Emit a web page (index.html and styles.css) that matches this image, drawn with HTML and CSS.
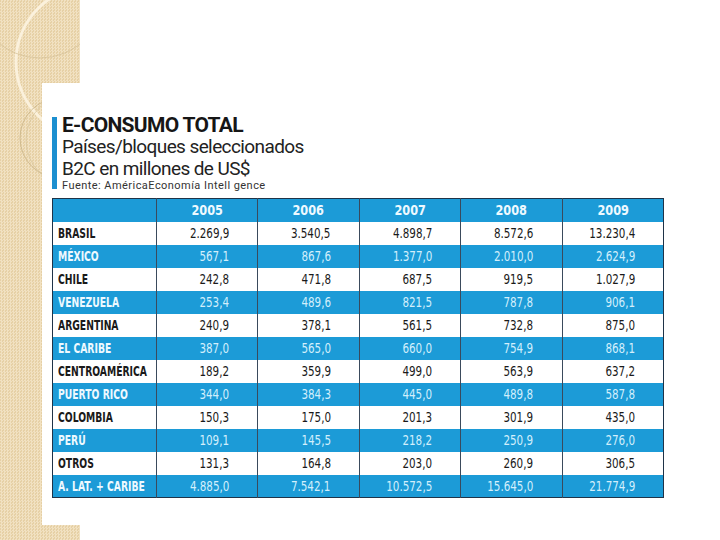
FILE: index.html
```html
<!DOCTYPE html>
<html lang="es">
<head>
<meta charset="utf-8">
<title>E-Consumo total</title>
<link rel="stylesheet" href="styles.css">
</head>
<body>
<div class="strip">
  <svg class="arcs" width="80" height="540" viewBox="0 0 80 540">
    <circle cx="92" cy="62" r="76" fill="none" stroke="#fbf1dc" stroke-width="3"/>
    <circle cx="60" cy="138" r="40" fill="none" stroke="#c9b487" stroke-width="0.8"/>
    <circle cx="40" cy="-6" r="64" fill="none" stroke="#d2bf95" stroke-width="0.7"/>
    <circle cx="72" cy="140" r="46" fill="none" stroke="#d6c49c" stroke-width="0.7"/>
  </svg>
</div>
<main class="panel">
  <header class="title-block">
    <div class="bar"></div>
    <div class="titles">
      <h1 class="t-main">E-CONSUMO TOTAL</h1>
      <p class="t-sub">Países/bloques seleccionados</p>
      <p class="t-sub">B2C en millones de US$</p>
      <p class="t-src">Fuente: AméricaEconomía Intell gence</p>
    </div>
  </header>
  <table class="data">
    <thead>
      <tr class="blue"><th></th><th><span>2005</span></th><th><span>2006</span></th><th><span>2007</span></th><th><span>2008</span></th><th><span>2009</span></th></tr>
    </thead>
    <tbody>
      <tr class="white"><th><span>BRASIL</span></th><td><span>2.269,9</span></td><td><span>3.540,5</span></td><td><span>4.898,7</span></td><td><span>8.572,6</span></td><td><span>13.230,4</span></td></tr>
      <tr class="blue"><th><span>MÉXICO</span></th><td><span>567,1</span></td><td><span>867,6</span></td><td><span>1.377,0</span></td><td><span>2.010,0</span></td><td><span>2.624,9</span></td></tr>
      <tr class="white"><th><span>CHILE</span></th><td><span>242,8</span></td><td><span>471,8</span></td><td><span>687,5</span></td><td><span>919,5</span></td><td><span>1.027,9</span></td></tr>
      <tr class="blue"><th><span>VENEZUELA</span></th><td><span>253,4</span></td><td><span>489,6</span></td><td><span>821,5</span></td><td><span>787,8</span></td><td><span>906,1</span></td></tr>
      <tr class="white"><th><span>ARGENTINA</span></th><td><span>240,9</span></td><td><span>378,1</span></td><td><span>561,5</span></td><td><span>732,8</span></td><td><span>875,0</span></td></tr>
      <tr class="blue"><th><span>EL CARIBE</span></th><td><span>387,0</span></td><td><span>565,0</span></td><td><span>660,0</span></td><td><span>754,9</span></td><td><span>868,1</span></td></tr>
      <tr class="white"><th><span>CENTROAMÉRICA</span></th><td><span>189,2</span></td><td><span>359,9</span></td><td><span>499,0</span></td><td><span>563,9</span></td><td><span>637,2</span></td></tr>
      <tr class="blue"><th><span>PUERTO RICO</span></th><td><span>344,0</span></td><td><span>384,3</span></td><td><span>445,0</span></td><td><span>489,8</span></td><td><span>587,8</span></td></tr>
      <tr class="white"><th><span>COLOMBIA</span></th><td><span>150,3</span></td><td><span>175,0</span></td><td><span>201,3</span></td><td><span>301,9</span></td><td><span>435,0</span></td></tr>
      <tr class="blue"><th><span>PERÚ</span></th><td><span>109,1</span></td><td><span>145,5</span></td><td><span>218,2</span></td><td><span>250,9</span></td><td><span>276,0</span></td></tr>
      <tr class="white"><th><span>OTROS</span></th><td><span>131,3</span></td><td><span>164,8</span></td><td><span>203,0</span></td><td><span>260,9</span></td><td><span>306,5</span></td></tr>
      <tr class="blue"><th><span>A. LAT. + CARIBE</span></th><td><span>4.885,0</span></td><td><span>7.542,1</span></td><td><span>10.572,5</span></td><td><span>15.645,0</span></td><td><span>21.774,9</span></td></tr>
    </tbody>
  </table>
</main>
</body>
</html>
```
FILE: styles.css
```css
html, body {
  margin: 0;
  padding: 0;
  background: #ffffff;
  width: 720px;
  height: 540px;
  overflow: hidden;
}

body {
  position: relative;
  font-family: "DejaVu Sans", sans-serif;
}

.strip {
  position: absolute;
  left: 0;
  top: 0;
  width: 80px;
  height: 540px;
  background-color: #eddab3;
  background-image:
    repeating-conic-gradient(#f1e1c1 0 25%, #e6d0a5 0 50%);
  background-size: 3px 3px;
  z-index: 0;
}

.arcs {
  display: block;
}

.panel {
  position: relative;
  z-index: 1;
  margin: 83px 0 0 42px;
  height: 442px;
  background: #ffffff;
  box-sizing: border-box;
  padding: 31px 0 0 10px;
}

.title-block {
  display: flex;
  gap: 5px;
  align-items: flex-start;
}

.bar {
  width: 5px;
  height: 72px;
  margin-top: 3px;
  background: #1c8fd0;
}

.titles {
  display: flex;
  flex-direction: column;
  font-family: "Roboto", "Liberation Sans", sans-serif;
  color: #1e1e1e;
}

.t-main {
  margin: 0;
  font-size: 21px;
  line-height: 22px;
  font-weight: 700;
  letter-spacing: -0.7px;
  color: #161616;
}

.t-sub {
  margin: 0;
  font-size: 19px;
  line-height: 22px;
  font-weight: 400;
  letter-spacing: -0.6px;
  color: #222;
}

.t-src {
  margin: 0;
  font-size: 11px;
  line-height: 11px;
  letter-spacing: 0.45px;
  color: #333;
}

.data {
  margin-top: 7px;
  border-collapse: collapse;
  width: 612px;
  border: 1.5px solid #1f3348;
  table-layout: fixed;
}

.data tr {
  height: 23px;
}

.data th,
.data td {
  padding: 0;
  border-left: 1px solid #3a4a5c;
  white-space: nowrap;
}

.data span {
  display: inline-block;
}

.data th:first-child {
  width: 98px;
  border-left: none;
  text-align: left;
  padding-left: 5px;
  font-weight: 700;
  font-size: 14px;
}

.data th:first-child span {
  transform: scaleX(0.66);
  transform-origin: left center;
}

.data thead th {
  text-align: center;
  font-size: 14.5px;
  font-weight: 700;
}

.data thead th span {
  transform: scaleX(0.78);
}

.data td {
  text-align: right;
  padding-right: 28px;
  font-size: 14px;
}

.data td span {
  transform: scaleX(0.74);
  transform-origin: right center;
}

.blue {
  background: #1c9bd7;
  color: #d3effc;
}

.blue th {
  color: #eef9ff;
}

.white {
  background: #ffffff;
  color: #1a1a1a;
}
```
